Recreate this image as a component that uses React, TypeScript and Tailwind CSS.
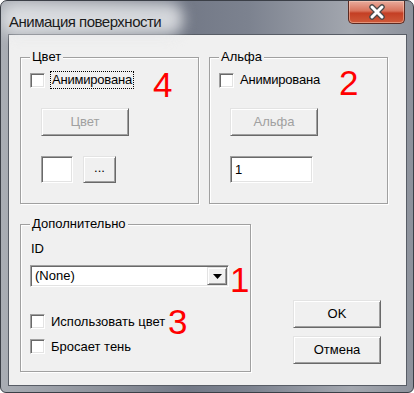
import React from "react";

const font = { fontFamily: '"Liberation Sans", Arial, sans-serif' };

const sunken =
  "border border-t-[#a0a0a0] border-l-[#a0a0a0] border-r-white border-b-white shadow-[inset_1px_1px_0_#696969,inset_-1px_-1px_0_#e3e3e3]";
const raised =
  "border border-t-[#e3e3e3] border-l-[#e3e3e3] border-r-[#696969] border-b-[#696969] shadow-[inset_1px_1px_0_#ffffff,inset_-1px_-1px_0_#a0a0a0] bg-[#f0f0f0]";

function Checkbox() {
  return <div className={`w-[15px] h-[15px] bg-white shrink-0 ${sunken}`} />;
}

function Group({
  label,
  className,
  children,
}: {
  label: string;
  className: string;
  children: React.ReactNode;
}) {
  return (
    <div
      className={`relative border border-[#a0a0a0] shadow-[1px_1px_0_#ffffff,inset_1px_1px_0_#ffffff] ${className}`}
    >
      <span className="absolute top-[-9px] left-[9px] px-[2px] bg-[#f0f0f0] text-[13px] leading-[15px] text-black">
        {label}
      </span>
      {children}
    </div>
  );
}

function Button({
  children,
  className,
  disabled,
}: {
  children: React.ReactNode;
  className: string;
  disabled?: boolean;
}) {
  return (
    <div
      className={`${raised} flex items-center justify-center text-[13px] ${
        disabled ? "text-[#a0a0a0]" : "text-black"
      } ${className}`}
    >
      {children}
    </div>
  );
}

export default function App() {
  return (
    <div
      className="relative w-[414px] h-[393px] overflow-hidden rounded-t-[7px] rounded-b-[6px] border border-[#3b3f47] bg-[linear-gradient(90deg,#a9adb4_0%,#878c96_30%,#737987_45%,#7c828f_60%,#a3a7af_85%,#8d929c_100%)]"
      style={font}
    >
      {/* title bar */}
      <div className="relative flex h-[33px] justify-between pl-[8px] pr-[8px]">
        <div className="relative mt-[9px] h-[20px]">
          <div className="absolute -left-[8px] -top-[7px] h-[32px] w-[182px] rounded-[14px] bg-[#e4e6e9] opacity-85 blur-[7px]" />
          <span className="relative text-[15px] leading-[20px] tracking-[-0.5px] text-[#1b1b1b]">
            Анимация поверхности
          </span>
        </div>
        <div className="flex h-[23px] w-[57px] items-center justify-center rounded-b-[5px] border border-t-0 border-[#5a2a22] bg-[linear-gradient(180deg,#e9ab9c_0%,#d9735c_45%,#c43f24_55%,#cf5a3a_100%)] shadow-[inset_0_0_0_1px_rgba(255,220,200,0.45)]">
          <svg width="18" height="16" viewBox="0 0 18 16">
            <path
              d="M4 3 L14 13 M14 3 L4 13"
              stroke="#4a4a4a"
              strokeWidth="5.5"
              strokeLinecap="round"
            />
            <path
              d="M4 3 L14 13 M14 3 L4 13"
              stroke="#ffffff"
              strokeWidth="3"
              strokeLinecap="round"
            />
          </svg>
        </div>
      </div>

      {/* client area */}
      <div className="ml-[7px] mr-[6px] h-[352px] border border-[#585d66] bg-[#f0f0f0] text-black">
        <div className="flex gap-[10px] pl-[11px] pt-[22px]">
          <Group label="Цвет" className="h-[147px] w-[179px]">
            <div className="flex flex-col items-start pl-[9px] pt-[13px]">
              <div className="flex h-[18px] items-center">
                <Checkbox />
                <span className="ml-[5px] border border-dotted border-black px-[1px] text-[13px] leading-[16px] tracking-[-0.2px]">
                  Анимирована
                </span>
              </div>
              <Button disabled className="ml-[11px] mt-[19px] h-[28px] w-[88px]">
                Цвет
              </Button>
              <div className="ml-[11px] mt-[20px] flex gap-[10px]">
                <div className={`h-[27px] w-[32px] bg-white ${sunken}`} />
                <Button className="h-[27px] w-[33px] pb-[4px] text-[#0b2a8a]">...</Button>
              </div>
            </div>
          </Group>
          <Group label="Альфа" className="h-[147px] w-[179px]">
            <div className="flex flex-col items-start pl-[9px] pt-[13px]">
              <div className="flex h-[18px] items-center">
                <Checkbox />
                <span className="ml-[6px] text-[13px] leading-[16px] tracking-[-0.2px]">Анимирована</span>
              </div>
              <Button disabled className="ml-[11px] mt-[19px] h-[28px] w-[88px]">
                Альфа
              </Button>
              <div
                className={`ml-[11px] mt-[20px] flex h-[27px] w-[83px] items-center bg-white pl-[4px] text-[13px] ${sunken}`}
              >
                1
              </div>
            </div>
          </Group>
        </div>

        <div className="mt-[20px] flex pl-[11px]">
          <Group label="Дополнительно" className="h-[148px] w-[231px]">
            <div className="flex flex-col items-start pl-[9px] pt-[16px]">
              <span className="ml-[1px] text-[13px] leading-[16px]">ID</span>
              <div
                className={`mt-[8px] flex h-[22px] w-[199px] items-center justify-between bg-white pl-[4px] pr-[1px] text-[13px] ${sunken}`}
              >
                <span>(None)</span>
                <div className={`${raised} flex h-[18px] w-[20px] items-center justify-center`}>
                  <svg width="9" height="5" viewBox="0 0 9 5">
                    <path d="M0 0 H9 L4.5 5 Z" fill="#000" />
                  </svg>
                </div>
              </div>
              <div className="mt-[27px] flex h-[15px] items-center">
                <Checkbox />
                <span className="ml-[6px] text-[13px] leading-[16px]">Использовать цвет</span>
              </div>
              <div className="mt-[10px] flex h-[15px] items-center">
                <Checkbox />
                <span className="ml-[6px] text-[13px] leading-[16px]">Бросает тень</span>
              </div>
            </div>
          </Group>
          <div className="ml-[42px] flex flex-col gap-[8px] pt-[76px]">
            <Button className="h-[28px] w-[88px]">OK</Button>
            <Button className="h-[28px] w-[88px]">Отмена</Button>
          </div>
        </div>
      </div>

      {/* red annotations */}
      <span className="absolute left-[152px] top-[66px] text-[35px] leading-none text-[#ff0000]">4</span>
      <span className="absolute left-[338px] top-[64px] text-[35px] leading-none text-[#ff0000]">2</span>
      <span className="absolute left-[229px] top-[261px] text-[35px] leading-none text-[#ff0000]">1</span>
      <span className="absolute left-[167px] top-[303px] text-[35px] leading-none text-[#ff0000]">3</span>
    </div>
  );
}
